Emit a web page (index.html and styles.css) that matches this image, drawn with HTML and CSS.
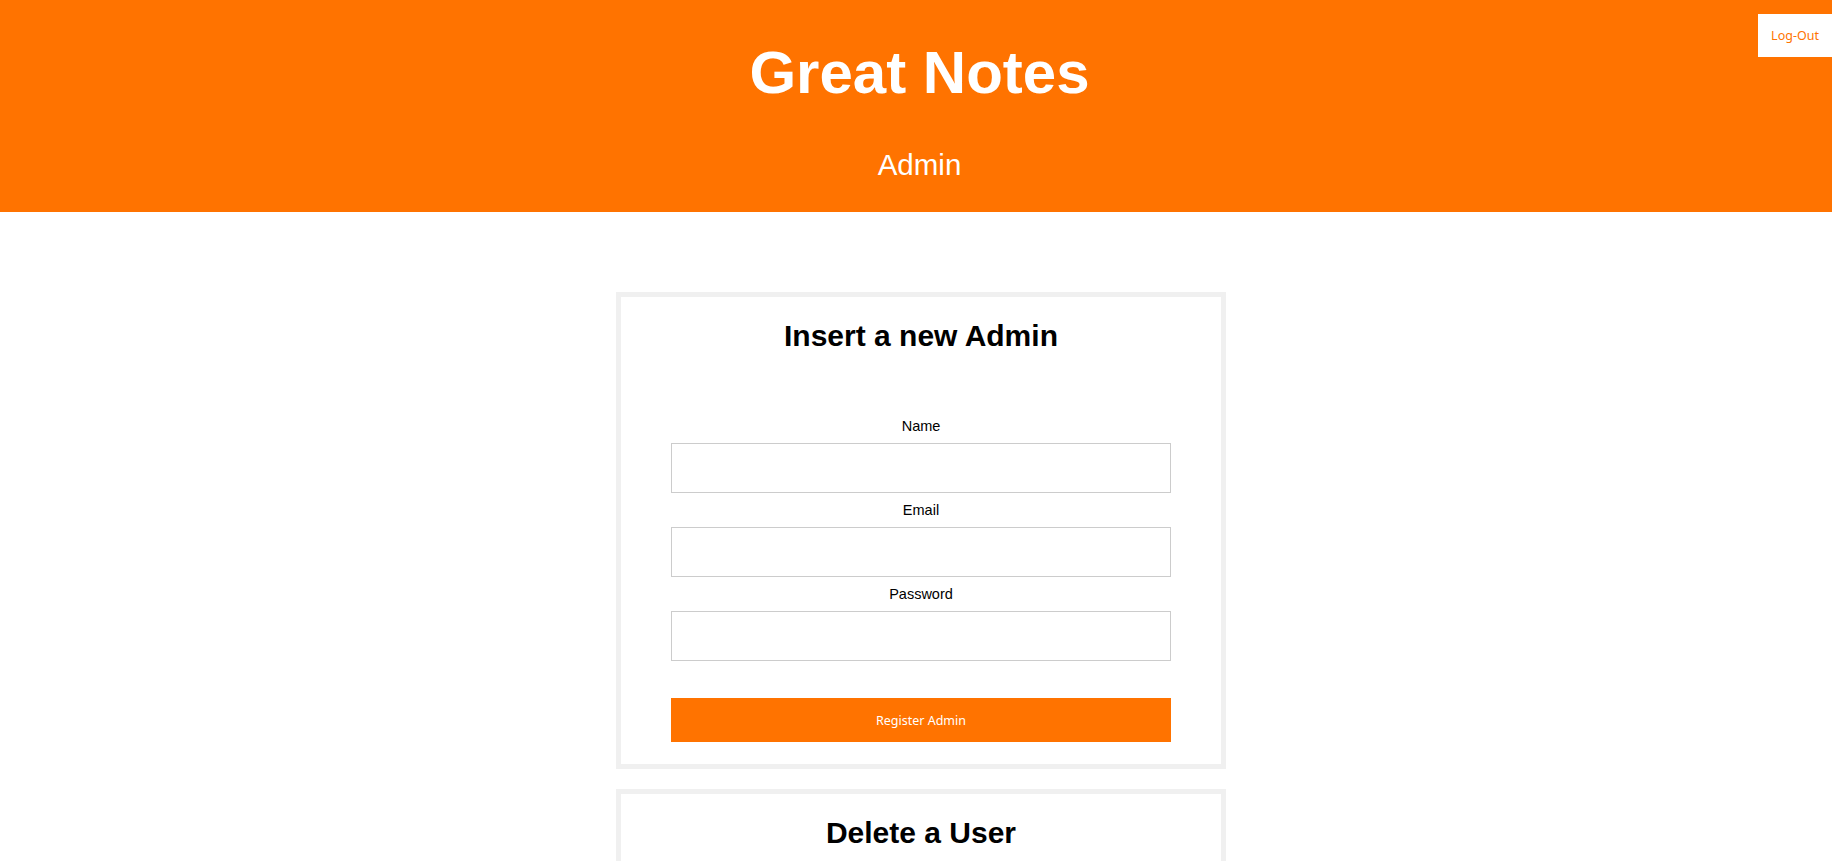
FILE: index.html
```html
<!DOCTYPE html>
<html lang="en">
<head>
<meta charset="utf-8">
<title>Great Notes - Admin</title>
<link rel="stylesheet" href="styles.css">
</head>
<body>
<header class="site-header">
  <h1 class="site-title">Great Notes</h1>
  <p class="site-subtitle">Admin</p>
  <button class="logout-btn" type="button">Log-Out</button>
</header>
<main class="content">
  <section class="card">
    <h2 class="card-title">Insert a new Admin</h2>
    <form class="card-form">
      <label class="field-label" for="name">Name</label>
      <input class="field-input" id="name" type="text">
      <label class="field-label" for="email">Email</label>
      <input class="field-input" id="email" type="email">
      <label class="field-label" for="password">Password</label>
      <input class="field-input" id="password" type="password">
      <button class="submit-btn" type="button">Register Admin</button>
    </form>
  </section>
  <section class="card">
    <h2 class="card-title">Delete a User</h2>
    <form class="card-form">
      <label class="field-label" for="del-email">Email</label>
      <input class="field-input" id="del-email" type="email">
      <button class="submit-btn" type="button">Delete User</button>
    </form>
  </section>
</main>
</body>
</html>
```

FILE: styles.css
```css
html, body {
  margin: 0;
  padding: 0;
  background: #ffffff;
}

body {
  font-family: "Liberation Sans", Arial, sans-serif;
  color: #000;
}

.site-header {
  position: relative;
  background: #ff7300;
  color: #ffffff;
  text-align: center;
  padding: 38px 0 30px 7px;
  margin-right: 3px;
}

.site-title {
  margin: 0;
  font-size: 60px;
  line-height: 70px;
  font-weight: bold;
}

.site-subtitle {
  margin: 40px 0 0;
  font-size: 29.5px;
  line-height: 34px;
  font-weight: normal;
}

.logout-btn {
  position: absolute;
  top: 14px;
  right: 0;
  width: 74px;
  height: 43px;
  border: none;
  background: #ffffff;
  color: #ff7300;
  font-family: "Noto Sans", "Open Sans", sans-serif;
  font-size: 12.5px;
  padding: 0;
  cursor: pointer;
}

.content {
  display: flex;
  flex-direction: column;
  align-items: center;
  gap: 20px;
  padding: 80px 0 40px 7px;
}

.card {
  width: 600px;
  border: 5px solid #f0f0f0;
  padding: 21px 0 22px;
  text-align: center;
}

.card-title {
  margin: 0 0 55px;
  font-size: 30px;
  line-height: 36px;
  font-weight: bold;
}

.card-form {
  display: flex;
  flex-direction: column;
  align-items: center;
}

.field-label {
  display: block;
  margin: 8px 0;
  font-size: 14.5px;
  line-height: 18px;
}

.field-input {
  box-sizing: border-box;
  width: 500px;
  height: 50px;
  border: 1px solid #cccccc;
  background: #ffffff;
  margin: 0;
  padding: 0 10px;
  font-family: inherit;
  font-size: 14px;
}

.submit-btn {
  width: 500px;
  height: 44px;
  margin-top: 37px;
  border: none;
  background: #ff7300;
  color: #ffffff;
  font-family: "Noto Sans", "Open Sans", sans-serif;
  font-size: 12.5px;
  cursor: pointer;
}
```
